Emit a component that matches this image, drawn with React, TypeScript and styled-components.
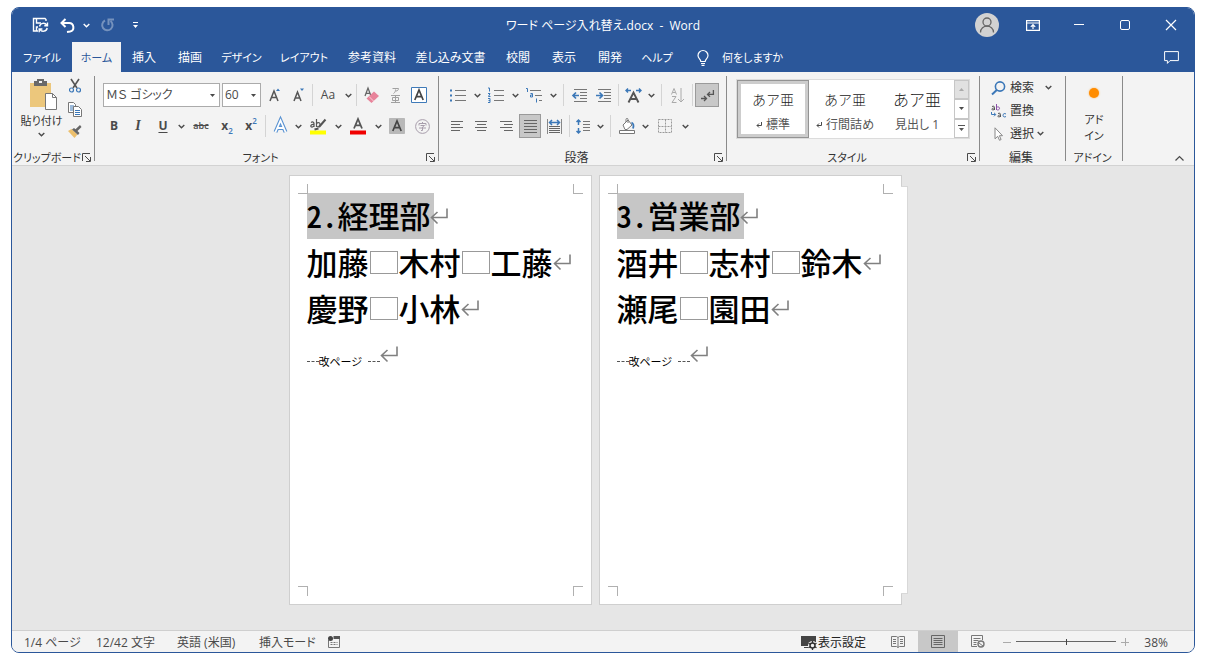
import React from "react";
import styled, { createGlobalStyle, css } from "styled-components";

const ink = "#4a4a4a";
const blue = "#2b579a";
const accent = "#3c78b8";

const GlobalStyle = createGlobalStyle`
  * { box-sizing: border-box; }
  body {
    margin: 0;
    background: #fff;
    color: ${ink};
    font-family: "Open Sans", "Noto Sans CJK JP", sans-serif;
    font-size: 12px;
    line-height: 16px;
    font-feature-settings: "palt";
  }
  button, select, input { font: inherit; color: inherit; font-feature-settings: inherit; }
  button { border: 0; padding: 0; background: none; cursor: pointer; }
  svg { display: block; flex: none; overflow: visible; }
`;

const Desktop = styled.div`
  min-height: 100vh;
  padding: 7px 14px 12px 11px;
  display: flex;
`;

const Window = styled.div`
  flex: 1;
  min-width: 0;
  display: flex;
  flex-direction: column;
  border: 1px solid ${blue};
  border-radius: 8px;
  overflow: hidden;
  background: #e6e6e6;
`;

/* ---------- title bar ---------- */

const TitleBar = styled.header`
  display: grid;
  grid-template-columns: 1fr auto 1fr;
  align-items: center;
  height: 34px;
  background: ${blue};
  color: #fff;
`;

const QuickAccess = styled.div`
  display: flex;
  align-items: center;
  padding-left: 14px;
`;

const BarButton = styled.button<{ $w: number; $dim?: boolean }>`
  width: ${(p) => p.$w}px;
  height: 32px;
  display: flex;
  align-items: center;
  justify-content: center;
  opacity: ${(p) => (p.$dim ? 0.35 : 1)};
`;

const Title = styled.h1`
  margin: 0;
  padding-top: 2px;
  font-size: 12px;
  font-weight: 400;
  white-space: pre;
`;

const Caption = styled.div`
  display: flex;
  justify-content: flex-end;
`;

/* ---------- tabs ---------- */

const TabRow = styled.nav`
  display: flex;
  height: 30px;
  background: ${blue};
  color: #fff;
`;

const Tab = styled.button<{ $w: number; $kana: boolean; $active?: boolean }>`
  width: ${(p) => p.$w}px;
  padding-top: 2px;
  font-size: ${(p) => (p.$kana ? 11 : 12)}px;
  white-space: nowrap;
  display: flex;
  align-items: center;
  justify-content: center;
  ${(p) => p.$active && css`background: #f3f3f3; color: ${blue};`}
`;

const TellMe = styled.button`
  display: flex;
  align-items: center;
  gap: 13px;
  margin-left: 16px;
  padding-top: 2px;
  font-size: 11px;
`;

const CommentButton = styled.button`
  margin-left: auto;
  width: 46px;
  display: flex;
  align-items: center;
  justify-content: center;
`;

/* ---------- ribbon ---------- */

const Ribbon = styled.section`
  display: flex;
  align-items: flex-start;
  height: 94px;
  padding-top: 4px;
  background: #f3f3f3;
  border-bottom: 1px solid #d2d2d2;
`;

const GroupBox = styled.div<{ $w: number }>`
  width: ${(p) => p.$w}px;
  height: 89px;
  display: flex;
  flex-direction: column;
`;

const GroupBody = styled.div<{ $pad?: string }>`
  flex: 1;
  padding: ${(p) => p.$pad ?? "7px 0 0 6px"};
`;

const GroupFoot = styled.div<{ $kana: boolean }>`
  display: flex;
  align-items: center;
  height: 16px;
  padding-right: 3px;
  font-size: ${(p) => (p.$kana ? 11 : 12)}px;
  color: #333;
`;

const GroupName = styled.span`
  flex: 1;
  padding-top: 1px;
  text-align: center;
  white-space: nowrap;
`;

const Divider = styled.div`
  width: 1px;
  height: 85px;
  background: #8a8a8a;
`;

const ToolRow = styled.div`
  display: flex;
  align-items: center;
  height: 24px;
  margin-bottom: 7px;
`;

const Tool = styled.button<{ $w: number; $on?: boolean }>`
  width: ${(p) => p.$w}px;
  height: 24px;
  display: flex;
  align-items: center;
  justify-content: center;
  ${(p) => p.$on && css`background: #c8c8c8; border: 1px solid #9a9a9a;`}
`;

const Sep = styled.span<{ $w: number }>`
  width: ${(p) => p.$w}px;
  display: flex;
  justify-content: center;
  &::before { content: ""; width: 1px; height: 22px; background: #d4d4d4; }
`;

const Combo = styled.label<{ $w: number }>`
  width: ${(p) => p.$w}px;
  height: 24px;
  margin-right: 2px;
  display: flex;
  align-items: center;
  border: 1px solid #ababab;
  background: #fff;
`;

const ComboSelect = styled.select`
  flex: 1;
  min-width: 0;
  height: 22px;
  padding: 0 0 0 2px;
  border: 0;
  outline: 0;
  appearance: none;
  background: transparent;
`;

const ComboArrow = styled.span`
  width: 14px;
  display: flex;
  justify-content: center;
`;

const Glyph = styled.span<{ $size?: number; $bold?: boolean }>`
  font-size: ${(p) => p.$size ?? 12}px;
  font-weight: ${(p) => (p.$bold ? 700 : 400)};
  line-height: 16px;
`;

const ItalicGlyph = styled(Glyph)`
  font-family: "Liberation Serif", serif;
  font-style: italic;
`;

const UnderGlyph = styled(Glyph)`
  text-decoration: underline;
  text-underline-offset: 2px;
`;

const StrikeGlyph = styled(Glyph)`
  font-weight: 600;
  text-decoration: line-through;
`;

const SmallMark = styled.span<{ $sup?: boolean }>`
  align-self: ${(p) => (p.$sup ? "flex-start" : "flex-end")};
  font-size: 8px;
  font-weight: 600;
  line-height: 14px;
  color: ${accent};
`;

/* clipboard */

const ClipboardBody = styled.div`
  flex: 1;
  display: flex;
  padding: 3px 0 0 8px;
`;

const PasteButton = styled.button`
  width: 43px;
  display: flex;
  flex-direction: column;
  align-items: center;
  white-space: nowrap;
  gap: 3px;
  font-size: 11px;
  color: #333;
`;

const ClipTools = styled.div`
  display: flex;
  flex-direction: column;
`;

const ClipTool = styled.button`
  width: 24px;
  height: 23px;
  display: flex;
  justify-content: center;
`;

/* styles gallery */

const Gallery = styled.div`
  display: flex;
  width: 234px;
  height: 60px;
  background: #fff;
  border: 1px solid #dcdcdc;
`;

const StyleCard = styled.button<{ $on?: boolean }>`
  width: 72px;
  display: flex;
  flex-direction: column;
  align-items: center;
  padding-top: 7px;
  white-space: nowrap;
  ${(p) => p.$on && css`border: 1px solid #949494; box-shadow: inset 0 0 0 3px #cdcdcd; padding-top: 6px;`}
`;

const Sample = styled.span<{ $size: number }>`
  height: 24px;
  line-height: 24px;
  font-size: ${(p) => p.$size}px;
  font-family: "Noto Sans CJK JP", sans-serif;
  font-weight: 300;
  color: #222;
  font-feature-settings: normal;
`;

const StyleName = styled.span`
  display: flex;
  align-items: center;
  gap: 4px;
  padding-top: 6px;
  color: #555;
`;

const Scroller = styled.div`
  margin-left: auto;
  width: 15px;
  display: flex;
  flex-direction: column;
`;

const ScrollStep = styled.button<{ $off?: boolean }>`
  flex: 1;
  display: flex;
  align-items: center;
  justify-content: center;
  border: 1px solid #c6c6c6;
  background: ${(p) => (p.$off ? "#e1e1e1" : "#fff")};
`;

/* editing + add-ins */

const EditButton = styled.button`
  display: flex;
  align-items: center;
  gap: 3px;
  height: 23px;
  color: #333;
`;

const EditIcon = styled.span`
  width: 17px;
  display: flex;
  justify-content: center;
`;

const WideChevron = styled.span`
  padding-left: 8px;
`;

const AddInButton = styled.button`
  width: 100%;
  display: flex;
  flex-direction: column;
  align-items: center;
  gap: 14px;
  font-size: 11px;
  color: #333;
`;

const Dot = styled.span`
  width: 10px;
  height: 10px;
  border-radius: 5px;
  background: #ff8c00;
  box-shadow: 0 0 2px #ffb050;
`;

const CollapseButton = styled.button`
  margin: 74px 8px 0 auto;
  width: 14px;
  height: 16px;
  display: flex;
  align-items: center;
  justify-content: center;
`;

/* ---------- document ---------- */

const Canvas = styled.main`
  flex: 1;
  display: flex;
  justify-content: center;
  align-items: flex-start;
  gap: 7px;
  padding: 9px 16px 24px 0;
`;

const Sheet = styled.article<{ $stacked?: boolean }>`
  position: relative;
  width: 303px;
  height: 430px;
  padding: 17px;
  background: #fff;
  border: 1px solid #cfcfcf;
  color: #000;
  ${(p) => p.$stacked && css`
    &::after {
      content: "";
      position: absolute;
      top: 10px;
      bottom: 10px;
      right: -7px;
      width: 6px;
      background: #fff;
      border: 1px solid #d8d8d8;
      border-left: 0;
    }
  `}
`;

const Crop = styled.span<{ $v: "top" | "bottom"; $h: "left" | "right" }>`
  position: absolute;
  ${(p) => p.$v}: 8px;
  ${(p) => p.$h}: 8px;
  width: 10px;
  height: 10px;
  border: 0 solid #b0b0b0;
  border-${(p) => (p.$v === "top" ? "bottom" : "top")}-width: 1px;
  border-${(p) => (p.$h === "left" ? "right" : "left")}-width: 1px;
`;

const Line = styled.p`
  margin: 0;
  height: 46px;
  display: flex;
  align-items: center;
  white-space: nowrap;
  font-family: "Noto Sans CJK JP", sans-serif;
  font-size: 31px;
  font-weight: 500;
  line-height: 44px;
  font-feature-settings: "hwid";
`;

const Selected = styled.span`
  height: 46px;
  padding-right: 3px;
  margin-right: -4px;
  background: #c6c6c6;
`;

const Space = styled.span`
  width: 28px;
  height: 23px;
  margin: 0 1px;
  border: 1px solid #999;
`;

const BreakText = styled.span`
  display: flex;
  align-items: center;
  padding-top: 14px;
  font-size: 11px;
  font-weight: 400;
  line-height: 16px;
  font-feature-settings: "palt";
`;

const Dashes = styled.span<{ $gap?: boolean }>`
  width: 12px;
  margin-left: ${(p) => (p.$gap ? 6 : 0)}px;
  border-bottom: 1px dashed #555;
`;

/* ---------- status bar ---------- */

const StatusBar = styled.footer`
  height: 22px;
  display: flex;
  align-items: center;
  border-top: 1px solid #cfcfcf;
  background: #f3f3f3;
  padding: 0 26px 0 12px;
`;

const StatusItem = styled.button<{ $w: number }>`
  width: ${(p) => p.$w}px;
  padding-top: 2px;
  text-align: left;
  white-space: nowrap;
`;

const StatusRight = styled.div`
  margin-left: auto;
  height: 21px;
  display: flex;
  align-items: center;
`;

const DisplaySettings = styled.button`
  display: flex;
  align-items: center;
  gap: 1px;
  margin-right: 12px;
  padding-top: 2px;
  color: #222;
`;

const ViewButton = styled.button<{ $on?: boolean }>`
  width: 40px;
  height: 21px;
  display: flex;
  align-items: center;
  justify-content: center;
  background: ${(p) => (p.$on ? "#c8c8c8" : "transparent")};
`;

const ZoomStep = styled.button`
  width: 18px;
  height: 21px;
  display: flex;
  align-items: center;
  justify-content: center;
`;

const ZoomRange = styled.input`
  appearance: none;
  width: 100px;
  height: 12px;
  margin: 0;
  background: linear-gradient(#666, #666) center / 100% 1px no-repeat;
  &::-webkit-slider-thumb {
    appearance: none;
    width: 1px;
    height: 6px;
    background: #444;
  }
`;

const ZoomValue = styled.button`
  width: 34px;
  padding-top: 2px;
  text-align: right;
`;

/* ---------- icons ---------- */

type IconProps = { w: number; h: number; children: React.ReactNode; stroke?: string; sw?: number };
const Icon = ({ w, h, children, stroke = ink, sw = 1 }: IconProps) => (
  <svg width={w} height={h} viewBox={`0 0 ${w} ${h}`} fill="none" stroke={stroke} strokeWidth={sw} aria-hidden="true">
    {children}
  </svg>
);

const Chevron = ({ color = ink }: { color?: string }) => (
  <Icon w={7} h={5} stroke={color} sw={1.4}><path d="M.7 1 3.500 3.700 6.300 1" /></Icon>
);
const Triangle = ({ up, color = ink }: { up?: boolean; color?: string }) => (
  <Icon w={5} h={3} stroke="none"><path d={up ? "M0 3h5L2.5 0z" : "M0 0h5L2.5 3z"} fill={color} /></Icon>
);
const Launcher = () => (
  <Icon w={9} h={9}><path d="M.5 8V.5H8M3 3l5 5M8.500 4v4.500H4" /></Icon>
);
const SaveSync = () => (
  <Icon w={17} h={16} stroke="#fff" sw={1.4}>
    <path d="M6 14H1.500V1.500H13L14 2.500V4M4.500 1.500V6H9M4.500 14v-4H6" />
    <path d="M7.500 9.500a4 4 0 0 1 7.300-1.300M15.500 5.500v3.200h-3.200M15.200 11a4 4 0 0 1-7.300 1.400M7.200 15.200V12h3.200" />
  </Icon>
);
const Undo = () => (
  <Icon w={15} h={15} stroke="#fff" sw={2}><path d="M5.500 1 1.500 5l4 4M2 5h7a4.300 4.300 0 0 1 1 8.500l-3 .5" /></Icon>
);
const Redo = () => (
  <Icon w={13} h={14} stroke="#fff" sw={2}><path d="M4 2.500A5.200 5.200 0 1 0 9.500 3M7.500 7V1.500H13" /></Icon>
);
const Customize = () => (
  <Icon w={5} h={7} stroke="none"><path d="M0 0h5v1H0zM0 3h5L2.500 6z" fill="#fff" /></Icon>
);
const Avatar = () => (
  <Icon w={24} h={24} stroke="#666" sw={1.3}>
    <circle cx="12" cy="12" r="12" fill="#d2d2d2" stroke="none" />
    <circle cx="12" cy="9" r="4" />
    <path d="M5.500 19.500c0-8.500 13-8.500 13 0" />
  </Icon>
);
const RibbonDisplay = () => (
  <Icon w={14} h={11} stroke="#fff" sw={1.2}><path d="M.6.6h12.800v9.800H.6zM.6 3h12.800M7 9V4.800M4.800 6.800 7 4.600l2.200 2.200" /></Icon>
);
const Bulb = () => (
  <Icon w={12} h={16} stroke="#fff" sw={1.2}><path d="M3.800 11.500C3.800 9 1 8.500 1 5.500a5 5 0 0 1 10 0c0 3-2.800 3.500-2.800 6zM4 13.500h4M4.500 15.400h3" /></Icon>
);
const Comment = () => (
  <Icon w={15} h={13} stroke="#fff"><path d="M.6.6h13.800v9H6l-2.600 2.800V9.600H.6z" /></Icon>
);
const Clipboard = () => (
  <Icon w={24} h={31} stroke="none">
    <path d="M0 4h21v24H0z" fill="#ecc77c" />
    <path d="M4 2h3V0h7v2h3v5H4z" fill="#6a6a6a" /><path d="M9 2h3v2H9z" fill="#f3f3f3" />
    <path d="M15.500 14.500h7l4 4v12h-11z" fill="#fff" stroke="#777" /><path d="M22.500 14.500v4h4" stroke="#777" />
  </Icon>
);
const Scissors = () => (
  <Icon w={12} h={14} sw={1.6}>
    <path d="M2 0l6 9M10 0 4 9" stroke="#555" />
    <circle cx="2.500" cy="11" r="2" stroke={accent} strokeWidth="1.200" /><circle cx="9.500" cy="11" r="2" stroke={accent} strokeWidth="1.200" />
  </Icon>
);
const Copy = () => (
  <Icon w={14} h={15} stroke="#777">
    <path d="M.5.5h5l2 2v8h-7z" fill="#fff" /><path d="M2 4h4M2 6h3M2 8h3" stroke={accent} />
    <path d="M5.500 4.500h5l3 3v7h-8z" fill="#fff" /><path d="M7 8.500h5M7 10.500h5M7 12.500h5" stroke={accent} />
  </Icon>
);
const Brush = () => (
  <Icon w={14} h={13} stroke="none">
    <path d="M0 6l6.500 7 3-3.500-6-5.500z" fill="#ecbf6c" /><path d="M4 4.500l6 5.500 1.500-2L9.500 6 13.500 2 12 0 7.500 4.300 6 3z" fill="#666" />
  </Icon>
);
const Eraser = () => (
  <Icon w={15} h={15} stroke="none">
    <path d="M1 8 4 0l3 8M2 5.300h4" stroke="#666" strokeWidth="1.300" />
    <path d="M2.500 10.500 10 3.500l5 4.500-7.500 7z" fill="#e8839a" /><path d="M5 8.500 9.500 13" stroke="#f8d0d8" />
  </Icon>
);
const Ruby = () => (
  <Icon w={9} h={16} stroke="#a0a0a0"><path d="M1.500 1.500h6c0 1.500-1 2.500-2.500 2.500M4.500 2.500c0 2-.5 3-2 4M0 8.500h9M1.500 10.500h6v3h-6zM4.500 8.500v7M0 15.500h9" /></Icon>
);
const Boxed = ({ fill, stroke }: { fill: string; stroke: string }) => (
  <Icon w={16} h={16} stroke="none">
    <path d="M.5.5h15v15H.5z" fill={fill} stroke={stroke} /><path d="M3.800 13 8 3l4.200 10M5.300 9.600h5.400" stroke="#444" strokeWidth="1.700" />
  </Icon>
);
const OutlineA = () => (
  <Icon w={13} h={14} stroke="none">
    <path d="M1.500 13 6.500 1.500l5 11.500M3.500 9h6" stroke="#5a93d2" strokeWidth="4" /><path d="M1.500 13 6.500 1.500l5 11.500M3.500 9h6" stroke="#fff" strokeWidth="1.800" />
  </Icon>
);
const Highlighter = () => (
  <Icon w={17} h={17} stroke="none">
    <path d="M0 12.500h16v4H0z" fill="#ff0" />
    <path d="M1 4.500c1.500-1 3-.5 3 1V9M4 6.500c-4-.5-4 3-1.500 2.500L4 8M6.500 1v8M6.500 5.500c2-2 4-.5 3.500 1.500S7.500 9.500 6.500 8" stroke="#555" strokeWidth="1.200" />
    <path d="M15.500 1.500 9 9M4.500 11.500l4-1" stroke="#555" strokeWidth="2" />
  </Icon>
);
const FontColor = () => (
  <Icon w={16} h={17} stroke="none">
    <path d="M0 12.500h16v4H0z" fill="#f00000" /><path d="M4 10.500 8 1l4 9.500M5.400 7.400h5.200" stroke="#555" strokeWidth="1.800" />
  </Icon>
);
const Enclosed = () => (
  <Icon w={15} h={15} stroke="#a89eac"><circle cx="7.500" cy="7.500" r="6.900" /><path d="M7.500 3v1.500M4 6.500v-2h7v2M5.500 6.500h4l-2 1.500v3.500H6M4 9h7" /></Icon>
);
const Bullets = () => (
  <Icon w={16} h={14}><path d="M5 2.500h11M5 7.500h11M5 12.500h11" stroke="#777" /><path d="M0 2.500h2M0 7.500h2M0 12.500h2" stroke={accent} strokeWidth="2" /></Icon>
);
const Numbers = () => (
  <Icon w={16} h={16}><path d="M6 3.500h10M6 8.500h10M6 13.500h10" stroke="#777" /><path d="M0 1h1.500v3.500M0 6.500h2L.5 9.500h2M0 11.500h2v4H0M.5 13.500H2" stroke={accent} /></Icon>
);
const Multilevel = () => (
  <Icon w={16} h={15}><path d="M4 2.500h11M9 7.500h7M13 12.500h3" stroke="#777" /><path d="M0 .5h1.500V4M4.500 5.500h2v3.500h-2v-2h2M10.500 10.500v4" stroke={accent} /></Icon>
);
const Indent = ({ right }: { right?: boolean }) => (
  <Icon w={16} h={14}>
    <path d="M2 1.500h13M8 4.500h7M8 7.500h7M8 10.500h7M2 13.500h13" stroke="#777" />
    <path d={right ? "M0 7.500h6M3.500 4.500l3 3-3 3" : "M7 7.500H1M4 4.500l-3 3 3 3"} stroke={accent} strokeWidth="1.700" />
  </Icon>
);
const ScaleA = () => (
  <Icon w={17} h={15}>
    <path d="M3.500 14.500 8.500 4.500l5 10M5.500 11h6" stroke="#555" strokeWidth="1.900" />
    <path d="M1 2.500h5M3 .5l-2 2 2 2M11 2.500h5M14 .5l2 2-2 2" stroke={accent} strokeWidth="1.400" />
  </Icon>
);
const Sort = () => (
  <Icon w={14} h={15} stroke="#aaa"><path d="M.5 6.500 3 .5l2.500 6M1.500 4.500h3M1 8.500h4l-4 6h4.500M10 0v14M7 11l3 3 3-3" /></Icon>
);
const Marks = () => (
  <Icon w={13} h={13} stroke="#555" sw={1.3}><path d="M12.400 1v4.400H7M9 3 6.500 5.400 9 7.800M0 9.500h5M3 7l2.500 2.500L3 12" /></Icon>
);
const Align = ({ kind }: { kind: "left" | "center" | "right" | "full" }) => {
  if (kind === "full") {
    return <Icon w={13} h={13} stroke="#666"><path d="M0 .5h13M0 3.500h13M0 6.500h13M0 9.500h13M0 12.500h13" /></Icon>;
  }
  const inset = kind === "center" ? 2 : kind === "right" ? 4 : 0;
  return (
    <Icon w={13} h={10} stroke="#666">
      <path d={`M0 .5h12M${inset} 3.500h9M0 6.500h12M${inset} 9.500h9`} />
    </Icon>
  );
};
const Distribute = () => (
  <Icon w={15} h={15}>
    <path d="M.5 0v15M14.500 0v15" stroke="#888" /><path d="M2 7.500h11M2 9.500h11M2 11.500h11M2 13.500h11" stroke="#666" />
    <path d="M2.500 3.500h10M5 1 2.500 3.500 5 6M10 1l2.500 2.500L10 6" stroke={accent} strokeWidth="1.500" />
  </Icon>
);
const LineSpacing = () => (
  <Icon w={14} h={15}>
    <path d="M7 2.500h7M7 5.500h7M7 8.500h7M7 11.500h7" stroke="#777" />
    <path d="M2.500 1v5M.5 3l2-2 2 2M2.500 9v5M.5 12l2 2 2-2" stroke={accent} strokeWidth="1.500" />
  </Icon>
);
const Bucket = () => (
  <Icon w={16} h={16} stroke="#777"><path d="M.5 12.500h15v3H.5z" fill="#fff" /><path d="M4 7l5-5 4 5-5 4.500H6zM7 4V1.500c0-1.500 2-1.500 2 0V5" fill="#fff" /><path d="M12.500 4.500c2 1 2.500 3 1.500 6" stroke={accent} strokeWidth="1.800" /></Icon>
);
const Borders = () => (
  <Icon w={14} h={14} stroke="#999"><path d="M.5.5h13v13H.5zM7.500.5v13M.5 7.500h13" strokeDasharray="2 1" /></Icon>
);
const ReturnSmall = () => (
  <Icon w={6} h={6}><path d="M5.500 0v3.500H1M3 1.500 1 3.500l2 2" /></Icon>
);
const Search = () => (
  <Icon w={15} h={14} stroke={accent} sw={1.6}><circle cx="9" cy="5.500" r="4.600" /><path d="M5.800 9 1 13.500" strokeWidth="2" /></Icon>
);
const Pointer = () => (
  <Icon w={9} h={14} stroke="#888"><path d="M1 .8v11l2.700-2.500 1.800 4 1.600-.8-1.700-3.800H8.500z" fill="#fff" /></Icon>
);
const Return = () => (
  <Icon w={18} h={18} stroke="#808080" sw={1.6}><path d="M17 1.500v9H2M7.500 5l-6 5.500 6 6" /></Icon>
);
const Macro = () => (
  <Icon w={12} h={12} stroke="#777"><path d="M.5 4v7.500h11V2.500" /><path d="M5.500 1.500H12" strokeWidth="3" stroke="#555" /><circle cx="2.500" cy="2.500" r="2.500" fill="#444" stroke="none" /><path d="M2.500 6.500h7M2.500 8.500h7" strokeDasharray="2 1" /></Icon>
);
const Monitor = () => (
  <Icon w={16} h={14} stroke="none">
    <path d="M0 0h15v10H0zM3 11h5v1H3z" fill="#444" /><circle cx="11.500" cy="9.500" r="4.500" fill="#f3f3f3" />
    <circle cx="11.500" cy="9.500" r="2.500" stroke="#333" strokeWidth="1.500" /><path d="M11.500 5v2M11.500 12v2M7.600 7.300l1.600.9M13.800 10.800l1.700 1M7.600 11.700l1.600-.9M13.800 8.200l1.700-1" stroke="#333" strokeWidth="1.300" />
  </Icon>
);
const ReadView = () => (
  <Icon w={14} h={12} stroke="#777"><path d="M.5.5h5L7 1.500 8.500.5h5v10h-5L7 11.500 5.500 10.500h-5zM7 1.500v10M2 3.500h3M2 5.500h3M2 7.500h3M9 3.500h3M9 5.500h3M9 7.500h3" /></Icon>
);
const PrintView = () => (
  <Icon w={14} h={13} stroke="#666"><path d="M.5.500h13v12H.500zM2.500 3.500h9M2.500 5.500h9M2.500 7.500h9M2.500 9.500h9" /></Icon>
);
const WebView = () => (
  <Icon w={14} h={13} stroke="#777"><path d="M6 11.500H.5V.5h11V5M2.500 3.500h7M2.500 5.500h5M2.500 7.500h3M2.500 9.500h3" /><circle cx="10" cy="9" r="3" strokeWidth="1.400" /><path d="M8 8l4 3" /></Icon>
);

/* ---------- pieces ---------- */

const isKana = (s: string) => /^[\u3040-\u30ff]+$/.test(s);

const tabs: [string, number][] = [
  ["ファイル", 60], ["ホーム", 49], ["挿入", 46], ["描画", 46], ["デザイン", 57], ["レイアウト", 68],
  ["参考資料", 68], ["差し込み文書", 89], ["校閲", 46], ["表示", 46], ["開発", 46], ["ヘルプ", 48],
];

const Drop = ({ label }: { label: string }) => (
  <Tool $w={12} aria-label={label}><Chevron /></Tool>
);

const GroupFooter = ({ name, launcher }: { name: string; launcher?: boolean }) => (
  <GroupFoot $kana={isKana(name)}>
    <GroupName>{name}</GroupName>
    {launcher && <button aria-label={`${name}の設定`}><Launcher /></button>}
  </GroupFoot>
);

const NameLine = ({ names }: { names: string[] }) => (
  <Line>
    {names.map((n, i) => (
      <React.Fragment key={n}>
        {i > 0 && <Space />}
        <span>{n}</span>
      </React.Fragment>
    ))}
    <Return />
  </Line>
);

type PageData = { heading: string; rows: string[][]; stacked?: boolean };
const pages: PageData[] = [
  { heading: "2.経理部", rows: [["加藤", "木村", "工藤"], ["慶野", "小林"]] },
  { heading: "3.営業部", rows: [["酒井", "志村", "鈴木"], ["瀬尾", "園田"]], stacked: true },
];

const Page = ({ heading, rows, stacked }: PageData) => (
  <Sheet $stacked={stacked}>
    <Crop $v="top" $h="left" /><Crop $v="top" $h="right" />
    <Crop $v="bottom" $h="left" /><Crop $v="bottom" $h="right" />
    <Line><Selected>{heading}</Selected><Return /></Line>
    {rows.map((r) => <NameLine key={r[0]} names={r} />)}
    <Line>
      <BreakText><Dashes />改ページ<Dashes $gap /></BreakText>
      <Return />
    </Line>
  </Sheet>
);

export default function App() {
  return (
    <Desktop>
      <GlobalStyle />
      <Window>
        <TitleBar>
          <QuickAccess>
            <BarButton $w={28} aria-label="保存"><SaveSync /></BarButton>
            <BarButton $w={26} aria-label="元に戻す"><Undo /></BarButton>
            <BarButton $w={12} aria-label="元に戻す一覧"><Chevron color="#fff" /></BarButton>
            <BarButton $w={30} $dim aria-label="やり直し"><Redo /></BarButton>
            <BarButton $w={26} aria-label="クイック アクセスのカスタマイズ"><Customize /></BarButton>
          </QuickAccess>
          <Title>ワード ページ入れ替え.docx  -  Word</Title>
          <Caption>
            <BarButton $w={46} aria-label="アカウント"><Avatar /></BarButton>
            <BarButton $w={46} aria-label="リボンの表示オプション"><RibbonDisplay /></BarButton>
            <BarButton $w={46} aria-label="最小化"><Icon w={10} h={10} stroke="#fff"><path d="M0 4.500h10" /></Icon></BarButton>
            <BarButton $w={46} aria-label="最大化"><Icon w={10} h={10} stroke="#fff"><rect x=".5" y=".5" width="9" height="9" rx="1.500" /></Icon></BarButton>
            <BarButton $w={46} aria-label="閉じる"><Icon w={10} h={10} stroke="#fff" sw={1.2}><path d="M0 0l10 10M10 0 0 10" /></Icon></BarButton>
          </Caption>
        </TitleBar>

        <TabRow>
          {tabs.map(([name, w]) => (
            <Tab key={name} $w={w} $kana={isKana(name)} $active={name === "ホーム"}>{name}</Tab>
          ))}
          <TellMe><Bulb />何をしますか</TellMe>
          <CommentButton aria-label="コメント"><Comment /></CommentButton>
        </TabRow>

        <Ribbon>
          <GroupBox $w={82}>
            <ClipboardBody>
              <PasteButton><Clipboard />貼り付け<Chevron /></PasteButton>
              <ClipTools>
                <ClipTool aria-label="切り取り"><Scissors /></ClipTool>
                <ClipTool aria-label="コピー"><Copy /></ClipTool>
                <ClipTool aria-label="書式のコピー"><Brush /></ClipTool>
              </ClipTools>
            </ClipboardBody>
            <GroupFooter name="クリップボード" launcher />
          </GroupBox>
          <Divider />

          <GroupBox $w={343}>
            <GroupBody $pad="7px 0 0 8px">
              <ToolRow>
                <Combo $w={117}>
                  <ComboSelect aria-label="フォント名"><option>ＭＳ ゴシック</option></ComboSelect>
                  <ComboArrow><Triangle /></ComboArrow>
                </Combo>
                <Combo $w={39}>
                  <ComboSelect aria-label="フォント サイズ"><option>60</option></ComboSelect>
                  <ComboArrow><Triangle /></ComboArrow>
                </Combo>
                <Tool $w={24} aria-label="フォントの拡大">
                  <Icon w={12} h={14}><path d="M1 13 5 3l4 10M2.500 9.500h5" stroke="#555" strokeWidth="1.500" /><path d="M7 3l2-2.500L11 3z" fill={accent} stroke="none" /></Icon>
                </Tool>
                <Tool $w={24} aria-label="フォントの縮小">
                  <Icon w={12} h={14}><path d="M1 13 4.500 4 8 13M2.300 10h4.400" stroke="#555" strokeWidth="1.500" /><path d="M7 .5l2 2.500L11 .5z" fill={accent} stroke="none" /></Icon>
                </Tool>
                <Sep $w={3} />
                <Tool $w={28} aria-label="文字種の変換"><Glyph>Aa</Glyph></Tool>
                <Drop label="文字種の一覧" />
                <Sep $w={5} />
                <Tool $w={24} aria-label="書式のクリア"><Eraser /></Tool>
                <Tool $w={24} aria-label="ルビ"><Ruby /></Tool>
                <Tool $w={24} aria-label="囲み線"><Boxed fill="#fff" stroke="#3f7ab8" /></Tool>
              </ToolRow>
              <ToolRow>
                <Tool $w={22} aria-label="太字"><Glyph $bold>B</Glyph></Tool>
                <Tool $w={26} aria-label="斜体"><ItalicGlyph $bold $size={14}>I</ItalicGlyph></Tool>
                <Tool $w={24} aria-label="下線"><UnderGlyph $bold>U</UnderGlyph></Tool>
                <Drop label="下線の種類" />
                <Tool $w={28} aria-label="取り消し線"><StrikeGlyph $size={9}>abc</StrikeGlyph></Tool>
                <Tool $w={24} aria-label="下付き"><Glyph $bold>x</Glyph><SmallMark>2</SmallMark></Tool>
                <Tool $w={24} aria-label="上付き"><Glyph $bold>x</Glyph><SmallMark $sup>2</SmallMark></Tool>
                <Sep $w={5} />
                <Tool $w={24} aria-label="文字の効果"><OutlineA /></Tool>
                <Drop label="文字の効果の一覧" />
                <Tool $w={28} aria-label="蛍光ペン"><Highlighter /></Tool>
                <Drop label="蛍光ペンの色" />
                <Tool $w={28} aria-label="フォントの色"><FontColor /></Tool>
                <Drop label="フォントの色の一覧" />
                <Tool $w={26} aria-label="文字の網かけ"><Boxed fill="#b8b8b8" stroke="#b8b8b8" /></Tool>
                <Tool $w={24} aria-label="囲い文字"><Enclosed /></Tool>
              </ToolRow>
            </GroupBody>
            <GroupFooter name="フォント" launcher />
          </GroupBox>
          <Divider />

          <GroupBox $w={287}>
            <GroupBody>
              <ToolRow>
                <Tool $w={26} aria-label="箇条書き"><Bullets /></Tool>
                <Drop label="箇条書きの一覧" />
                <Tool $w={26} aria-label="段落番号"><Numbers /></Tool>
                <Drop label="段落番号の一覧" />
                <Tool $w={26} aria-label="アウトライン"><Multilevel /></Tool>
                <Drop label="アウトラインの一覧" />
                <Sep $w={9} />
                <Tool $w={24} aria-label="インデントを減らす"><Indent /></Tool>
                <Tool $w={24} aria-label="インデントを増やす"><Indent right /></Tool>
                <Sep $w={5} />
                <Tool $w={24} aria-label="拡張書式"><ScaleA /></Tool>
                <Drop label="拡張書式の一覧" />
                <Sep $w={9} />
                <Tool $w={24} aria-label="並べ替え"><Sort /></Tool>
                <Sep $w={5} />
                <Tool $w={24} $on aria-label="編集記号の表示"><Marks /></Tool>
              </ToolRow>
              <ToolRow>
                <Tool $w={24} aria-label="左揃え"><Align kind="left" /></Tool>
                <Tool $w={24} aria-label="中央揃え"><Align kind="center" /></Tool>
                <Tool $w={26} aria-label="右揃え"><Align kind="right" /></Tool>
                <Tool $w={22} $on aria-label="両端揃え"><Align kind="full" /></Tool>
                <Tool $w={26} aria-label="均等割り付け"><Distribute /></Tool>
                <Sep $w={5} />
                <Tool $w={22} aria-label="行間"><LineSpacing /></Tool>
                <Drop label="行間の一覧" />
                <Sep $w={9} />
                <Tool $w={24} aria-label="塗りつぶし"><Bucket /></Tool>
                <Drop label="塗りつぶしの色" />
                <Tool $w={28} aria-label="罫線"><Borders /></Tool>
                <Drop label="罫線の一覧" />
              </ToolRow>
            </GroupBody>
            <GroupFooter name="段落" launcher />
          </GroupBox>
          <Divider />

          <GroupBox $w={252}>
            <GroupBody $pad="3px 0 0 9px">
              <Gallery>
                <StyleCard $on><Sample $size={14}>あア亜</Sample><StyleName><ReturnSmall />標準</StyleName></StyleCard>
                <StyleCard><Sample $size={14}>あア亜</Sample><StyleName><ReturnSmall />行間詰め</StyleName></StyleCard>
                <StyleCard><Sample $size={16}>あア亜</Sample><StyleName>見出し 1</StyleName></StyleCard>
                <Scroller>
                  <ScrollStep $off aria-label="前の行"><Triangle up color="#aaa" /></ScrollStep>
                  <ScrollStep aria-label="次の行"><Triangle /></ScrollStep>
                  <ScrollStep aria-label="その他"><Icon w={7} h={7} stroke="none"><path d="M0 0h7v1H0zM1 3h5L3.500 6z" fill="#555" /></Icon></ScrollStep>
                </Scroller>
              </Gallery>
            </GroupBody>
            <GroupFooter name="スタイル" launcher />
          </GroupBox>
          <Divider />

          <GroupBox $w={85}>
            <GroupBody $pad="0 0 0 10px">
              <EditButton><EditIcon><Search /></EditIcon>検索<WideChevron><Chevron /></WideChevron></EditButton>
              <EditButton>
                <EditIcon>
                  <Icon w={17} h={16}>
                    <path d="M2 3.500c2-.8 2.500 0 2.500 1V7M4.500 5c-3-.2-3.200 2-1.500 2l1.500-.7" stroke="#555" />
                    <path d="M6.500 1v6M6.500 4.500c1-1 3-.8 3 .8S7.500 7.500 6.500 6.500" stroke="#8a4fa8" />
                    <path d="M1.500 9v2.500h4M4 9.800l1.800 1.700L4 13.300" stroke={accent} />
                    <path d="M8 10.500c2-.8 2.500 0 2.500 1V14M10.500 12c-3-.2-3.200 2-1.500 2l1.500-.7" stroke="#555" />
                    <path d="M16 11c-1.500-1-3-.3-3 1.300s1.500 2.200 3 1.200" stroke={accent} />
                  </Icon>
                </EditIcon>置換
              </EditButton>
              <EditButton><EditIcon><Pointer /></EditIcon>選択<Chevron /></EditButton>
            </GroupBody>
            <GroupFooter name="編集" />
          </GroupBox>
          <Divider />

          <GroupBox $w={56}>
            <GroupBody $pad="12px 0 0">
              <AddInButton><Dot /><span>アド<br />イン</span></AddInButton>
            </GroupBody>
            <GroupFooter name="アドイン" />
          </GroupBox>
          <Divider />
          <CollapseButton aria-label="リボンを折りたたむ"><Icon w={9} h={5} sw={1.2}><path d="M.5 4.500l4-4 4 4" /></Icon></CollapseButton>
        </Ribbon>

        <Canvas>
          {pages.map((p) => <Page key={p.heading} {...p} />)}
        </Canvas>

        <StatusBar>
          <StatusItem $w={72}>1/4 ページ</StatusItem>
          <StatusItem $w={81}>12/42 文字</StatusItem>
          <StatusItem $w={82}>英語 (米国)</StatusItem>
          <StatusItem $w={69}>挿入モード</StatusItem>
          <button aria-label="マクロの記録"><Macro /></button>
          <StatusRight>
            <DisplaySettings><Monitor />表示設定</DisplaySettings>
            <ViewButton aria-label="閲覧モード"><ReadView /></ViewButton>
            <ViewButton $on aria-label="印刷レイアウト"><PrintView /></ViewButton>
            <ViewButton aria-label="Web レイアウト"><WebView /></ViewButton>
            <ZoomStep aria-label="縮小"><Icon w={8} h={8} stroke="#aaa"><path d="M0 4.500h8" /></Icon></ZoomStep>
            <ZoomRange type="range" min={0} max={100} defaultValue={50} aria-label="ズーム" />
            <ZoomStep aria-label="拡大"><Icon w={8} h={8} stroke="#aaa"><path d="M0 4.500h8M4.500 0v8" /></Icon></ZoomStep>
            <ZoomValue>38%</ZoomValue>
          </StatusRight>
        </StatusBar>
      </Window>
    </Desktop>
  );
}
